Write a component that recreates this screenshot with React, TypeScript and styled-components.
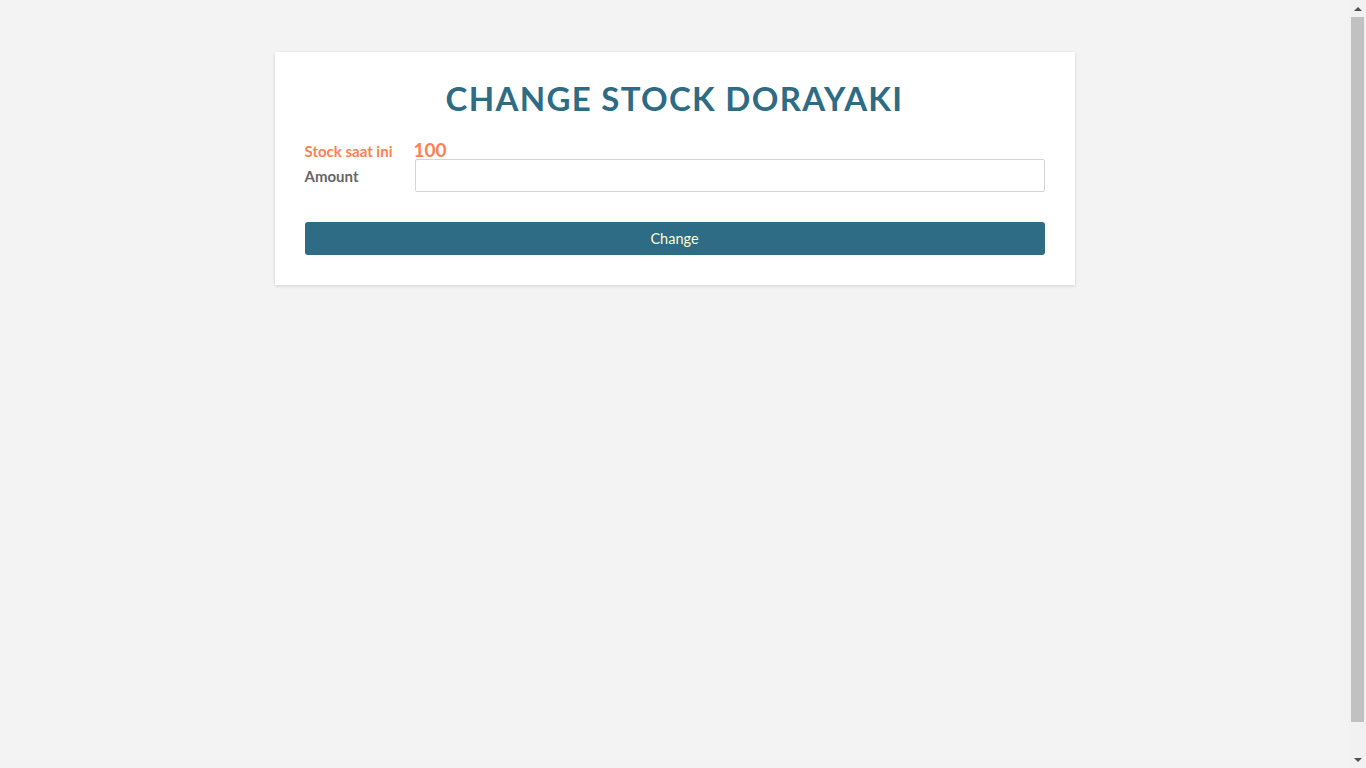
import React from "react";
import styled, { createGlobalStyle } from "styled-components";

const Global = createGlobalStyle`
  html, body { margin: 0; padding: 0; }
  body {
    background: #f3f3f3;
    font-family: Lato, "Open Sans", sans-serif;
    min-height: 800px;
  }
`;

const Page = styled.div`
  display: flex;
  justify-content: center;
  padding-top: 52px;
  padding-right: 17px;
`;

const Card = styled.div`
  width: 800px;
  box-sizing: border-box;
  background: #ffffff;
  padding: 24px 30px 30px;
  box-shadow: 0 1px 3px rgba(0, 0, 0, 0.15);
`;

const Title = styled.h1`
  margin: 0 0 21px;
  text-align: center;
  font-family: Lato, sans-serif;
  font-weight: 700;
  font-size: 33px;
  line-height: 44px;
  letter-spacing: 1.3px;
  color: #2e6b84;
`;

const Row = styled.div`
  display: grid;
  grid-template-columns: 110px 1fr;
  align-items: center;
`;

const StockRow = styled(Row)`
  height: 18px;
  align-items: baseline;
`;

const Label = styled.label<{ $accent?: boolean }>`
  font-family: Lato, sans-serif;
  font-weight: 700;
  font-size: 15px;
  line-height: 18px;
  color: ${(p) => (p.$accent ? "#ff7f50" : "#666666")};
`;

const StockValue = styled.span`
  font-family: Lato, sans-serif;
  font-weight: 700;
  font-size: 19px;
  line-height: 18px;
  color: #ff7f50;
  margin-left: -1px;
`;

const Input = styled.input`
  box-sizing: border-box;
  width: 100%;
  height: 33px;
  border: 1px solid #d4d4d4;
  border-radius: 2px;
  outline: none;
  background: #fff;
`;

const Button = styled.button`
  display: block;
  width: 100%;
  height: 33px;
  margin-top: 30px;
  border: none;
  border-radius: 3px;
  background: #2e6b84;
  color: #fffad2;
  font-family: Lato, sans-serif;
  font-size: 14.5px;
  cursor: pointer;
`;

const ScrollTrack = styled.div`
  position: fixed;
  top: 0;
  right: 0;
  width: 17px;
  height: 100vh;
  background: #f1f1f1;
  display: flex;
  flex-direction: column;
  align-items: center;
`;

const Arrow = styled.div<{ $down?: boolean }>`
  height: 17px;
  width: 17px;
  display: flex;
  align-items: center;
  justify-content: center;
  &::after {
    content: "";
    border-left: 4px solid transparent;
    border-right: 4px solid transparent;
    ${(p) =>
      p.$down
        ? "border-top: 4px solid #505050;"
        : "border-bottom: 4px solid #505050;"}
  }
`;

const Thumb = styled.div`
  width: 13px;
  height: 705px;
  background: #c1c1c1;
`;

const Spacer = styled.div`
  flex: 1;
`;

export default function App() {
  return (
    <>
      <Global />
      <Page>
        <Card>
          <Title>CHANGE STOCK DORAYAKI</Title>
          <StockRow>
            <Label $accent>Stock saat ini</Label>
            <StockValue>100</StockValue>
          </StockRow>
          <Row>
            <Label htmlFor="amount">Amount</Label>
            <Input id="amount" type="number" />
          </Row>
          <Button>Change</Button>
        </Card>
      </Page>
      <ScrollTrack aria-hidden>
        <Arrow />
        <Thumb />
        <Spacer />
        <Arrow $down />
      </ScrollTrack>
    </>
  );
}
